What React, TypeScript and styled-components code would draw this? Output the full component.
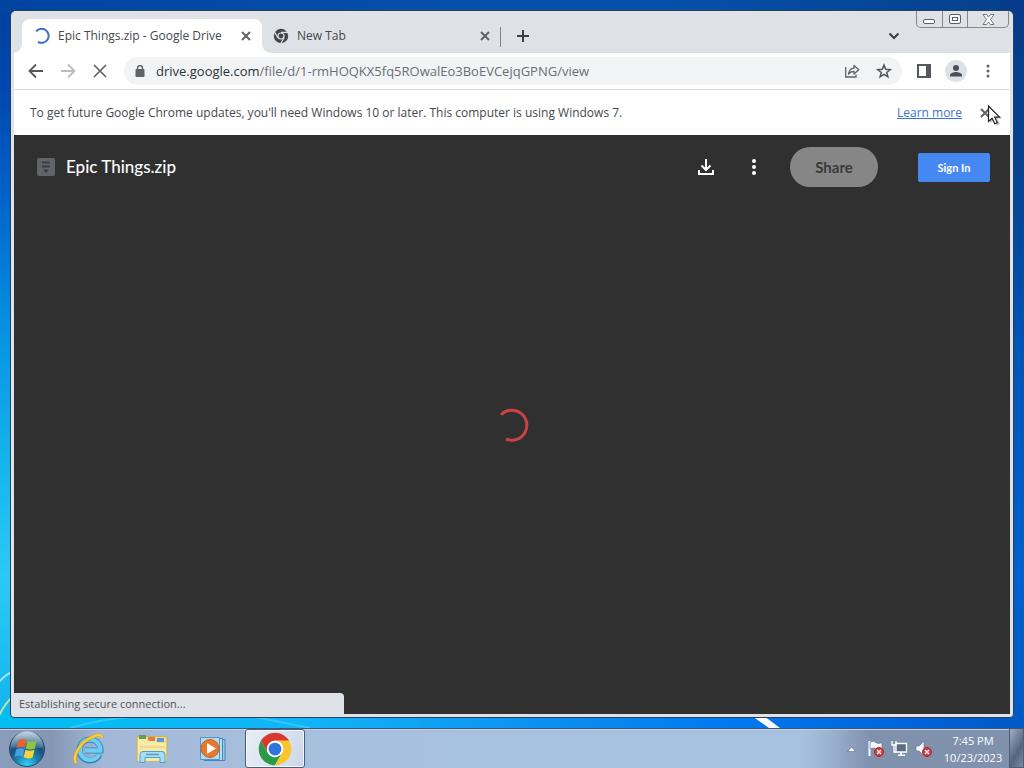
import React from "react";
import styled, { createGlobalStyle, css } from "styled-components";

const UI = `"Open Sans", "Noto Sans", sans-serif`;
const PRODUCT = `Lato, "Open Sans", sans-serif`;

const GlobalStyle = createGlobalStyle`
  * { box-sizing: border-box; }
  body { margin: 0; font-family: ${UI}; font-size: 12px; color: #3c4043; }
  button { font: inherit; color: inherit; border: 0; padding: 0; background: none; }
  svg { display: block; flex: none; }
`;

/* ---------- desktop ---------- */

const Desktop = styled.div`
  position: relative;
  display: flex;
  flex-direction: column;
  min-height: 100vh;
  overflow: hidden;
  background:
    linear-gradient(90deg, #00bdf2, #12b4f6 30%, #0a8df0 55%, #007bf0 70%, #0062d8 90%, #0059c4) 0 712px / 100% 20px no-repeat,
    linear-gradient(#053b8a, #04428f 20%, #0054b6 45%, #0060cc 75%, #0058c0) 100% 0 / 24px 100% no-repeat,
    linear-gradient(90deg, #0044a0, #0450ab 45%, #0550aa 65%, #053f8b) 0 0 / 100% 14px no-repeat,
    linear-gradient(#003f9e, #0048ae 12%, #0064ca 26%, #0590e0 42%, #14b4ec 60%, #2bcaf4 75%, #17b8ee 90%, #08b4ee);
`;

const Streaks = styled.svg`
  position: absolute;
  left: 0;
  bottom: 40px;
`;

const WindowArea = styled.div`
  position: relative;
  flex: 1;
  display: flex;
  padding: 10px;
`;

const BrowserWindow = styled.main`
  flex: 1;
  min-width: 0;
  display: flex;
  flex-direction: column;
  padding: 0 3px 3px;
  border: 1px solid #29405f;
  border-radius: 6px 6px 4px 4px;
  background: #dfe2e8;
`;

/* ---------- tab strip ---------- */

const TabStrip = styled.header`
  display: flex;
  align-items: flex-end;
  height: 42px;
  padding-left: 8px;
  background: #dee1e6;
`;

const Tab = styled.div<{ $active?: boolean }>`
  position: relative;
  display: flex;
  align-items: center;
  gap: 8px;
  flex: 0 1 240px;
  min-width: 0;
  height: 34px;
  padding: 0 8px 0 12px;
  & + & { margin-left: -1px; }
  ${(p) =>
    p.$active &&
    css`
      z-index: 1;
      background: #fff;
      border-radius: 8px 8px 0 0;
      &::before, &::after {
        content: "";
        position: absolute;
        bottom: 0;
        width: 8px;
        height: 8px;
      }
      &::before { left: -8px; background: radial-gradient(circle at 0 0, transparent 7px, #fff 8px); }
      &::after { right: -8px; background: radial-gradient(circle at 100% 0, transparent 7px, #fff 8px); }
    `}
`;

const TabTitle = styled.span`
  flex: 1;
  min-width: 0;
  overflow: hidden;
  white-space: nowrap;
  font-size: 12px;
  line-height: 16px;
  color: #45494d;
`;

const IconButton = styled.button<{ $size?: number }>`
  display: grid;
  place-items: center;
  flex: none;
  width: ${(p) => p.$size ?? 32}px;
  height: ${(p) => p.$size ?? 32}px;
  border-radius: 50%;
  color: #5f6368;
`;

const TabDivider = styled.span`
  width: 1px;
  height: 20px;
  margin: 0 6px 6px -1px;
  background: #808489;
`;

const NewTab = styled(IconButton)`
  margin-bottom: 1px;
  color: #3c4043;
`;

const TabSearch = styled(IconButton)`
  margin: 0 6px 1px auto;
  color: #3c4043;
`;

const CaptionButtons = styled.div`
  display: flex;
  align-self: flex-start;
  height: 17px;
  margin-right: 1px;
  border: 1px solid #85888e;
  border-top: 0;
  border-radius: 0 0 5px 5px;
`;

const CaptionButton = styled.button<{ $wide?: boolean }>`
  display: grid;
  place-items: center;
  width: ${(p) => (p.$wide ? 41 : 25)}px;
  & + & { border-left: 1px solid #85888e; }
`;

/* ---------- toolbar ---------- */

const Toolbar = styled.nav`
  display: flex;
  align-items: center;
  height: 37px;
  padding: 0 6px;
  background: #fff;
  border-bottom: 1px solid #dadce0;
`;

const Omnibox = styled.div`
  flex: 1;
  min-width: 0;
  display: flex;
  align-items: center;
  height: 28px;
  margin: 0 6px 0 8px;
  padding: 0 2px 0 8px;
  border-radius: 14px;
  background: #f1f3f4;
`;

const Lock = styled.span`
  display: grid;
  place-items: center;
  width: 16px;
  margin-right: 8px;
`;

const Url = styled.span`
  flex: 1;
  min-width: 0;
  overflow: hidden;
  white-space: nowrap;
  font-size: 13px;
  line-height: 20px;
  color: #6b6f74;
  b { font-weight: 400; color: #303338; }
`;

const Avatar = styled.span`
  display: grid;
  place-items: center;
  width: 22px;
  height: 22px;
  border-radius: 50%;
  background: #dee1e6;
`;

/* ---------- infobar ---------- */

const InfoBar = styled.section`
  display: flex;
  align-items: center;
  height: 45px;
  padding: 0 16px;
  background: #fff;
`;

const InfoText = styled.p`
  flex: 1;
  margin: 0;
  font-size: 12px;
  line-height: 16px;
  color: #45494d;
`;

const LearnMore = styled.a`
  margin-right: 14px;
  font-size: 12px;
  line-height: 16px;
  color: #3b74cc;
`;

const CloseWrap = styled.div`
  position: relative;
`;

const Pointer = styled.svg`
  position: absolute;
  left: 11px;
  top: 1px;
  pointer-events: none;
`;

/* ---------- page ---------- */

const Page = styled.section`
  position: relative;
  flex: 1;
  display: flex;
  flex-direction: column;
  background: #303030;
`;

const ViewerBar = styled.div`
  display: flex;
  align-items: center;
  height: 64px;
  padding: 0 20px 0 23px;
  color: #fff;
`;

const FileName = styled.h1`
  flex: 1;
  margin: 0 0 0 11px;
  font-family: ${PRODUCT};
  font-size: 17px;
  font-weight: 500;
  line-height: 22px;
`;

const ViewerAction = styled(IconButton)`
  margin-right: 8px;
  color: #fff;
`;

const ShareButton = styled.button`
  width: 88px;
  height: 40px;
  margin: 0 40px 0 8px;
  border-radius: 20px;
  background: #868686;
  color: #3a3a3a;
  font-family: ${PRODUCT};
  font-size: 15px;
  font-weight: 700;
`;

const SignIn = styled.button`
  width: 72px;
  height: 29px;
  border-radius: 2px;
  background: #4688f2;
  color: #fff;
  font-family: ${PRODUCT};
  font-size: 11px;
  font-weight: 700;
`;

const Loading = styled.div`
  flex: 1;
  display: grid;
  place-items: center;
  padding-bottom: 64px;
`;

const StatusBubble = styled.div`
  position: absolute;
  left: 0;
  bottom: 0;
  width: 330px;
  height: 21px;
  padding: 0 5px;
  border-radius: 0 4px 0 0;
  background: #dfe2e6;
  font-size: 11px;
  line-height: 21px;
  color: #505357;
`;

/* ---------- taskbar ---------- */

const Taskbar = styled.footer`
  position: relative;
  display: flex;
  height: 40px;
  border-top: 1px solid #3c5876;
  box-shadow: inset 0 1px 0 #c3d3e6;
  background: linear-gradient(90deg, #8a9ebc, #8496b4 5%, #a3b8d6 10%, #a7c0df 30%, #a7c2e0 78%, #9bb2d0 81%, #8091ae 85%, #8091ae);
`;

const TaskButton = styled.button<{ $width: number; $active?: boolean }>`
  display: grid;
  place-items: center;
  width: ${(p) => p.$width}px;
  height: 39px;
  ${(p) =>
    p.$active &&
    css`
      border: 1px solid #4c5d76;
      border-radius: 3px;
      box-shadow: inset 0 0 0 1px #f3f6fb;
      background: linear-gradient(110deg, #e9eef6, #dbe3ef 50%, #ccd7e8);
    `}
`;

const Tray = styled.div`
  display: flex;
  align-items: center;
  gap: 4px;
  margin-left: auto;
`;

const TrayButton = styled.button`
  display: grid;
  place-items: center;
  width: 20px;
  height: 24px;
`;

const Clock = styled.time`
  width: 64px;
  margin-left: 4px;
  text-align: center;
  font-size: 11px;
  line-height: 17px;
  color: #fff;
  white-space: nowrap;
`;

const ShowDesktop = styled.button`
  width: 15px;
  align-self: stretch;
  border: 1px solid #4d5f7a;
  border-width: 0 1px 1px;
  background: linear-gradient(120deg, #9fadc2, #6d7d97 40%, #55657f 60%, #7c8ba4);
`;

/* ---------- icons ---------- */

const Cross = ({ size, width }: { size: number; width: number }) => (
  <svg width={size} height={size} viewBox={`0 0 ${size} ${size}`} stroke="currentColor" strokeWidth={width}>
    <path d={`M1 1 ${size - 1} ${size - 1} M${size - 1} 1 1 ${size - 1}`} />
  </svg>
);

const Dots = ({ r, step }: { r: number; step: number }) => (
  <svg width="20" height="20" viewBox="0 0 20 20" fill="currentColor">
    <circle cx="10" cy={10 - step} r={r} />
    <circle cx="10" cy="10" r={r} />
    <circle cx="10" cy={10 + step} r={r} />
  </svg>
);

const Arrow = ({ flip, color }: { flip?: boolean; color: string }) => (
  <svg width="16" height="16" viewBox="0 0 16 16" fill="none" stroke={color} strokeWidth="1.8">
    <path d={flip ? "M1 8H14.5M8 1.5 14.5 8 8 14.5" : "M15 8H1.5M8 1.5 1.5 8 8 14.5"} />
  </svg>
);

const TabSpinner = () => (
  <svg width="16" height="16" viewBox="0 0 16 16" fill="none" stroke="#3a6bd0" strokeWidth="2">
    <path d="M2.2 3.4A7 7 0 1 1 4 13.8" />
  </svg>
);

const ChromeMono = () => (
  <svg width="16" height="16" viewBox="0 0 16 16">
    <circle cx="8" cy="8" r="7.2" fill="#41464f" />
    <circle cx="8" cy="8" r="3.6" fill="#dee1e6" />
    <circle cx="8" cy="8" r="2.4" fill="#41464f" />
    <path d="M8 4.4H15M4.9 9.8 1.4 3.8M11.1 9.8 7.6 15.8" stroke="#dee1e6" strokeWidth="1.2" />
  </svg>
);

const ChromeLogo = () => (
  <svg width="34" height="34" viewBox="0 0 48 48">
    <circle cx="24" cy="24" r="22" fill="#fff" />
    <path d="M4.1 12.5A23 23 0 0 1 43.9 12.5H24A11.5 11.5 0 0 0 14 29.7Z" fill="#d9392c" />
    <path d="M4.1 12.5 14 29.8A11.5 11.5 0 0 0 24 35.5L34 29.8 24 47A23 23 0 0 1 4.1 12.5Z" fill="#2c9a48" />
    <path d="M43.9 12.5A23 23 0 0 1 24 47L34 29.8A11.5 11.5 0 0 0 24 12.5Z" fill="#fac62c" />
    <circle cx="24" cy="24" r="11.5" fill="#fff" />
    <circle cx="24" cy="24" r="9" fill="#2f73e0" />
  </svg>
);

const StartOrb = () => (
  <svg width="38" height="38" viewBox="0 0 38 38">
    <defs>
      <radialGradient id="orb" cx="0.5" cy="0.95" r="0.9">
        <stop offset="0" stopColor="#35d4f4" />
        <stop offset="0.35" stopColor="#1a84b4" />
        <stop offset="0.65" stopColor="#1d4f7c" />
        <stop offset="1" stopColor="#6f8fae" />
      </radialGradient>
      <linearGradient id="gloss" x2="0" y2="1">
        <stop offset="0" stopColor="#dfeaf4" stopOpacity="0.8" />
        <stop offset="1" stopColor="#8db0cc" stopOpacity="0.2" />
      </linearGradient>
    </defs>
    <circle cx="19" cy="19" r="17.5" fill="url(#orb)" stroke="#28486a" />
    <path d="M3 17A16 16 0 0 1 35 17Q19 21 3 17Z" fill="url(#gloss)" />
    <path d="M10.500 10.500q4-2.500 8-.5l-1.800 7.800q-4-2-8 0Z" fill="#e8642a" />
    <path d="M19.800 10.800q4 2 9-.2l-2 8q-4 2-9-.2Z" fill="#8dc63f" />
    <path d="M8.400 19.300q4-2 8 0l-1.800 7.400q-4-2-8 .2Z" fill="#4a9fe0" />
    <path d="M17.600 19.700q4 2 9 0l-2 7.800q-4 2-9-.2Z" fill="#fcd13a" />
  </svg>
);

const InternetExplorer = () => (
  <svg width="32" height="32" viewBox="0 0 32 32" fill="none">
    <path d="M26.500 21.500A10.500 10.500 0 1 1 27.500 17.500H12" stroke="#2b86c0" strokeWidth="6" />
    <path d="M26 21.500A10.200 10.200 0 1 1 27.200 17.500H12" stroke="#6fcdf2" strokeWidth="4.400" />
    <path d="M3 30C-1 24 7 9 19 4c5-2.500 10-3 10 1" stroke="#d89a10" strokeWidth="3.200" />
    <path d="M3 30C-1 24 7 9 19 4c5-2.500 10-3 10 1" stroke="#f8cf3c" strokeWidth="2.200" />
  </svg>
);

const Explorer = () => (
  <svg width="32" height="30" viewBox="0 0 32 30">
    <path d="M1 2.500h30V27H1Z" fill="#f0dc88" stroke="#cdb25c" />
    <path d="M3 1h7v4H3Z" fill="#5da05a" />
    <path d="M12 3h7v4h-7Z" fill="#e07b4a" />
    <path d="M21 4h7v4h-7Z" fill="#5a9ad0" />
    <path d="M2 5h9l2 2h7l2 2h8v18H2Z" fill="#f7eaa6" />
    <path d="M4 13h25" stroke="#ead98a" strokeWidth="2" />
    <path d="M4 28.500v-8q0-3 3-3h19q3 0 3 3v8h-5v-5H9v5Z" fill="#a8dcf2" stroke="#4f9fcc" />
    <path d="M10 20.500h13" stroke="#4f9fcc" strokeWidth="1.500" />
  </svg>
);

const MediaPlayer = () => (
  <svg width="28" height="26" viewBox="0 0 28 26">
    <path d="M7 3.500h19v21H7Z" fill="#9cc8e4" stroke="#4189b8" />
    <path d="M5 2.500h18.500v22H5Z" fill="#b8dcf0" stroke="#4189b8" />
    <path d="M1.500 1.500h19v22h-19Z" fill="#b4d8ee" stroke="#4d97c6" />
    <circle cx="11" cy="12.500" r="9" fill="#e8792c" stroke="#c8601c" />
    <path d="M8 7v11l9-5.500Z" fill="#fff" />
  </svg>
);

const Badge = () => (
  <g>
    <circle cx="12" cy="12" r="4.500" fill="#d63a3a" stroke="#a82424" />
    <path d="m10 10 4 4m0-4-4 4" stroke="#fff" strokeWidth="1.300" />
  </g>
);

export default function App() {
  return (
    <Desktop>
      <GlobalStyle />
      <Streaks width="800" height="60" viewBox="0 0 800 60" fill="none" aria-hidden="true">
        <path d="M-2 15Q6 6 12 4" stroke="#bdf0ff" strokeWidth="2" opacity="0.8" />
        <path d="M-2 50Q3 38 12 29" stroke="#b6e6a0" strokeWidth="2" />
        <path d="M70 60Q100 51 140 48M250 48l60 12" stroke="#6fdcff" strokeWidth="2" opacity="0.4" />
        <path d="M752 48h12l16 12h-11Z" fill="#fff" />
      </Streaks>

      <WindowArea>
        <BrowserWindow>
          <TabStrip>
            <Tab $active>
              <TabSpinner />
              <TabTitle>Epic Things.zip - Google Drive</TabTitle>
              <IconButton $size={16} aria-label="Close tab"><Cross size={10} width={2} /></IconButton>
            </Tab>
            <Tab>
              <ChromeMono />
              <TabTitle>New Tab</TabTitle>
              <IconButton $size={16} aria-label="Close tab"><Cross size={10} width={2} /></IconButton>
            </Tab>
            <TabDivider />
            <NewTab aria-label="New tab">
              <svg width="12" height="12" viewBox="0 0 12 12" stroke="currentColor" strokeWidth="2"><path d="M6 0v12M0 6h12" /></svg>
            </NewTab>
            <TabSearch aria-label="Search tabs">
              <svg width="12" height="8" viewBox="0 0 12 8" fill="none" stroke="currentColor" strokeWidth="2"><path d="m1.500 1.500 4.500 4.500 4.500-4.500" /></svg>
            </TabSearch>
            <CaptionButtons>
              <CaptionButton aria-label="Minimize">
                <svg width="13" height="12" viewBox="0 0 13 12"><rect x="0.500" y="6.500" width="11" height="4" rx="1.500" fill="#fff" stroke="#5c6068" /></svg>
              </CaptionButton>
              <CaptionButton aria-label="Restore">
                <svg width="12" height="10" viewBox="0 0 12 10" fill="#f6f7f9" stroke="#5c6068"><rect x="0.500" y="0.500" width="11" height="9" rx="1.500" /><rect x="3.500" y="3.500" width="5" height="3" /></svg>
              </CaptionButton>
              <CaptionButton $wide aria-label="Close">
                <svg width="13" height="11" viewBox="0 0 13 11" fill="#fff" stroke="#70747c"><path d="M1 .5h3.500l2 2.500 2-2.500H12L8.500 5.500 12 10.500H8.500l-2-2.500-2 2.500H1l3.500-5Z" /></svg>
              </CaptionButton>
            </CaptionButtons>
          </TabStrip>

          <Toolbar aria-label="Browser toolbar">
            <IconButton aria-label="Back"><Arrow color="#54585d" /></IconButton>
            <IconButton aria-label="Forward" disabled><Arrow flip color="#b9bcc0" /></IconButton>
            <IconButton aria-label="Stop loading"><Cross size={14} width={1.7} /></IconButton>
            <Omnibox>
              <Lock>
                <svg width="10" height="12" viewBox="0 0 10 12"><rect x="0.500" y="4" width="9" height="8" rx="1" fill="#5f6368" /><path d="M2.500 5V3a2.500 2.500 0 0 1 5 0v2" fill="none" stroke="#5f6368" strokeWidth="1.400" /></svg>
              </Lock>
              <Url><b>drive.google.com</b>/file/d/1-rmHOQKX5fq5ROwalEo3BoEVCejqGPNG/view</Url>
              <IconButton aria-label="Share this page">
                <svg width="16" height="14" viewBox="0 0 16 14" fill="none" stroke="#5f6368" strokeWidth="1.300"><path d="M1.700 3v10H12v-2.500" /><path d="M4.500 10.200C5 6.500 7 4.500 10 4.200V1.500l4.800 4.300L10 10V7.300C7.800 7.300 6 8 4.500 10.200Z" strokeLinejoin="round" /></svg>
              </IconButton>
              <IconButton aria-label="Bookmark this tab">
                <svg width="16" height="16" viewBox="0 0 16 16" fill="none" stroke="#54585d" strokeWidth="1.500"><path d="m8 2 1.700 4.300 4.600.3-3.600 2.900 1.200 4.400L8 11.400l-3.900 2.500 1.200-4.400L1.700 6.600l4.600-.3Z" /></svg>
              </IconButton>
            </Omnibox>
            <IconButton aria-label="Side panel">
              <svg width="14" height="14" viewBox="0 0 14 14"><path d="M1 1h12v12H1Z" fill="none" stroke="#54585d" strokeWidth="2" /><path d="M9 1h4v12H9Z" fill="#54585d" /></svg>
            </IconButton>
            <IconButton aria-label="Profile">
              <Avatar>
                <svg width="14" height="14" viewBox="0 0 14 14" fill="#4a4e57"><circle cx="7" cy="4" r="3" /><path d="M1 12.500V11c0-2 4-3 6-3s6 1 6 3v1.500Z" /></svg>
              </Avatar>
            </IconButton>
            <IconButton aria-label="Browser menu"><Dots r={1.5} step={5} /></IconButton>
          </Toolbar>

          <InfoBar>
            <InfoText>To get future Google Chrome updates, you'll need Windows 10 or later. This computer is using Windows 7.</InfoText>
            <LearnMore href="#learn-more">Learn more</LearnMore>
            <CloseWrap>
              <IconButton $size={18} aria-label="Dismiss"><Cross size={10} width={2} /></IconButton>
              <Pointer width="16" height="22" viewBox="0 0 16 22">
                <path d="M3 3v15l4-3.500 3 6 3-1.500-3-5.500h5Z" fill="#000" opacity="0.25" />
                <path d="M1.500 1v15.500l3.600-3.300 2.600 5.600 2.600-1.200-2.600-5.400h4.800Z" fill="#fff" stroke="#222" strokeWidth="1.200" />
              </Pointer>
            </CloseWrap>
          </InfoBar>

          <Page>
            <ViewerBar>
              <svg width="18" height="18" viewBox="0 0 18 18"><rect width="18" height="18" rx="2" fill="#626568" /><path d="M5 4.500h8M5 8.500h8" stroke="#3b3d40" strokeWidth="2" /><path d="M6 11.500h6l-3 3.500Z" fill="#3b3d40" /></svg>
              <FileName>Epic Things.zip</FileName>
              <ViewerAction $size={40} aria-label="Download">
                <svg width="16" height="16" viewBox="0 0 16 16" fill="none" stroke="currentColor" strokeWidth="2"><path d="M8 0v11M3.500 6.500 8 11l4.500-4.500M1 11v4h14v-4" /></svg>
              </ViewerAction>
              <ViewerAction $size={40} aria-label="More actions"><Dots r={2} step={6} /></ViewerAction>
              <ShareButton>Share</ShareButton>
              <SignIn>Sign In</SignIn>
            </ViewerBar>
            <Loading role="status" aria-label="Loading">
              <svg width="34" height="34" viewBox="0 0 34 34" fill="none" stroke="#c94343" strokeWidth="3"><path d="M6 6.800A15 15 0 1 1 11 31" /></svg>
            </Loading>
            <StatusBubble>Establishing secure connection...</StatusBubble>
          </Page>
        </BrowserWindow>
      </WindowArea>

      <Taskbar>
        <TaskButton $width={54} aria-label="Start"><StartOrb /></TaskButton>
        <TaskButton $width={70} aria-label="Internet Explorer"><InternetExplorer /></TaskButton>
        <TaskButton $width={56} aria-label="File Explorer"><Explorer /></TaskButton>
        <TaskButton $width={65} aria-label="Media Player"><MediaPlayer /></TaskButton>
        <TaskButton $width={60} $active aria-label="Google Chrome"><ChromeLogo /></TaskButton>
        <Tray>
          <TrayButton aria-label="Show hidden icons">
            <svg width="9" height="6" viewBox="0 0 9 6"><path d="M.5 5.500 4.500.8l4 4.700Z" fill="#fff" stroke="#5a6a84" strokeWidth="0.600" /></svg>
          </TrayButton>
          <TrayButton aria-label="Action Center">
            <svg width="17" height="17" viewBox="0 0 17 17"><path d="M2.500 1v15" stroke="#fff" strokeWidth="2" /><path d="M3 2q4-1.500 6 .5t6 0v7q-4 1.500-6-.5t-6 0Z" fill="#f4f6fa" stroke="#5a6a84" strokeWidth="0.600" /><Badge /></svg>
          </TrayButton>
          <TrayButton aria-label="Network">
            <svg width="17" height="17" viewBox="0 0 17 17" fill="none"><path d="M5 3.500h10.500v8.500H5Z" fill="#5d6c84" stroke="#fff" strokeWidth="1.300" /><path d="M10 12v3M7 15.300h7" stroke="#fff" strokeWidth="1.500" /><path d="M1 1v4h4V1M3 5v7h2" stroke="#fff" strokeWidth="1.300" /></svg>
          </TrayButton>
          <TrayButton aria-label="Volume">
            <svg width="17" height="17" viewBox="0 0 17 17"><path d="M1 6h3l5-5v15l-5-5H1Z" fill="#f4f6fa" stroke="#5a6a84" strokeWidth="0.600" /><Badge /></svg>
          </TrayButton>
          <Clock>7:45 PM<br />10/23/2023</Clock>
          <ShowDesktop aria-label="Show desktop" />
        </Tray>
      </Taskbar>
    </Desktop>
  );
}
